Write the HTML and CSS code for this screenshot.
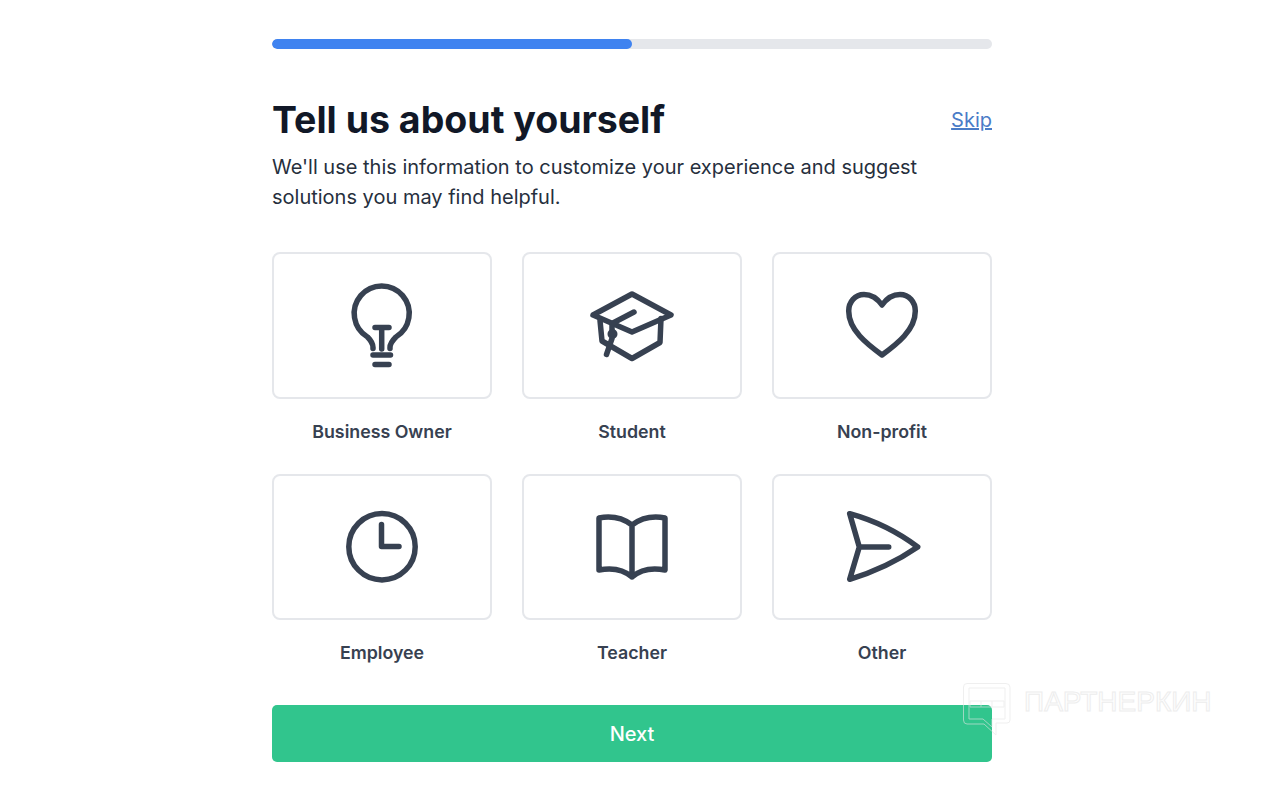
FILE: index.html
```html
<!DOCTYPE html>
<html lang="en">
<head>
<meta charset="utf-8">
<title>Tell us about yourself</title>
<link rel="stylesheet" href="styles.css">
</head>
<body>
<main class="page">
  <div class="progress"><div class="progress-fill"></div></div>
  <header class="head">
    <h1 class="title">Tell us about yourself</h1>
    <a class="skip" href="#">Skip</a>
  </header>
  <p class="intro">We'll use this information to customize your experience and suggest solutions you may find helpful.</p>
  <section class="grid">
    <div class="option">
      <div class="card"><svg class="icon" viewBox="-3 -1 110 110"><path d="M43 77.500v-1c0-4-2.500-7.500-5.500-10.500A27.500 27.500 0 1 1 65.900 66c-3 3-5.900 6.500-5.900 10.500v1"/><path d="M51.700 56.500V78M45 56.500H59M43 84H60.500M45 93.500H59"/></svg></div>
      <div class="label">Business Owner</div>
    </div>
    <div class="option">
      <div class="card"><svg class="icon" viewBox="0 -0.500 110 110"><path d="M55 23.500 94 44.500 55 61.500 16 44.500Z"/><path d="M23 50 25 70.500 55 88 83 72 84 48"/><path d="M57 41.500 35 53V63M35 68 29.500 84"/><circle class="dot" cx="35.500" cy="63.500" r="4"/></svg></div>
      <div class="label">Student</div>
    </div>
    <div class="option">
      <div class="card"><svg class="icon" viewBox="0 0 110 110"><path d="M55 35C50 28 44 24.500 37 24.500 28 24.500 21.700 32 21.700 41 21.700 60 40 74 55 85 70 74 88.300 60 88.300 41 88.300 32 82 24.500 73 24.500 66 24.500 60 28 55 35Z"/></svg></div>
      <div class="label">Non-profit</div>
    </div>
    <div class="option">
      <div class="card"><svg class="icon" viewBox="0 0 110 110"><circle cx="55" cy="54.700" r="33.200"/><path d="M54.500 32.500V54.500H72"/></svg></div>
      <div class="label">Employee</div>
    </div>
    <div class="option">
      <div class="card"><svg class="icon" viewBox="0 0 110 110"><path d="M55 33C47 27 35 23.500 22 26V78C35 75.500 47 78 55 85 63 78 75 75.500 88 78V26C75 23.500 63 27 55 33ZM55 33V85"/></svg></div>
      <div class="label">Teacher</div>
    </div>
    <div class="option">
      <div class="card"><svg class="icon" viewBox="0 0 110 110"><path d="M22.700 21.700Q60 32 90.700 55 60 76 22.700 87.300L32.300 55ZM32.300 55H61.700"/></svg></div>
      <div class="label">Other</div>
    </div>
  </section>
  <button class="next" type="button">Next</button>
</main>
<div class="watermark">
  <svg class="wm-logo" viewBox="0 0 50 53"><path d="M6 .5H45Q49 .5 49 4.500V37Q49 40 46 40H35V52L23 41H6Q2.500 41 2.500 37V4Q2.500 .5 6 .5Z"/><path d="M8 5H44V36H31V44L22 36H8Z"/><path d="M9 18H43V24H9ZM20 18V24M31 18V24"/></svg>
  <span class="wm-text">ПАРТНЕРКИН</span>
</div>
</body>
</html>
```
FILE: styles.css
```css
* { box-sizing: border-box; }
html, body { margin: 0; background: #fff; }
body {
  padding: 39px 0 0 2px;
  font-family: Inter, "Liberation Sans", sans-serif;
  color: #111827;
  height: 788px;
  overflow: hidden;
  position: relative;
}
.page { width: 720px; margin: 0 auto; }
.progress { height: 10px; background: #e5e7eb; border-radius: 5px; overflow: hidden; }
.progress-fill { width: 50%; height: 100%; background: #3f83f0; border-radius: 5px; }
.head { display: flex; justify-content: space-between; align-items: center; margin-top: 51px; height: 40px; }
.title { margin: 0; font-size: 37.5px; line-height: 40px; font-weight: 700; color: #111827; }
.skip { font-size: 20px; line-height: 30px; color: #4a7cc7; text-decoration: underline; }
.intro { margin: 12px 0 0; font-size: 20px; line-height: 30px; color: #262f3d; }
.grid { display: grid; grid-template-columns: repeat(3, 220px); column-gap: 30px; row-gap: 30px; margin-top: 40px; }
.option { display: flex; flex-direction: column; }
.card {
  height: 146.5px;
  border: 2px solid #e5e7eb;
  border-radius: 8px;
  display: flex;
  align-items: center;
  justify-content: center;
}
.icon {
  width: 110px;
  height: 110px;
  fill: none;
  stroke: #374151;
  stroke-width: 5.500;
  stroke-linecap: round;
  stroke-linejoin: round;
}
.icon .dot { fill: #374151; stroke-width: 2; }
.label { margin-top: 21px; font-size: 17.800px; line-height: 24px; font-weight: 600; text-align: center; color: #374151; }
.next {
  display: block;
  width: 100%;
  height: 57px;
  margin-top: 40px;
  border: 0;
  border-radius: 5px;
  background: #31c58d;
  color: #fff;
  font-family: inherit;
  font-size: 20px;
  font-weight: 500;
}
.watermark {
  position: absolute;
  left: 961px;
  top: 683px;
  display: flex;
  align-items: flex-start;
  gap: 13px;
  pointer-events: none;
  opacity: .6;
}
.wm-logo { width: 50px; height: 53px; fill: none; stroke: #e6e6e6; stroke-width: 1; }
.wm-text {
  margin-top: 1px;
  font-family: "Liberation Sans", sans-serif;
  font-size: 28px;
  line-height: 36px;
  color: transparent;
  -webkit-text-stroke: 1px #e2e2e2;
}
```
